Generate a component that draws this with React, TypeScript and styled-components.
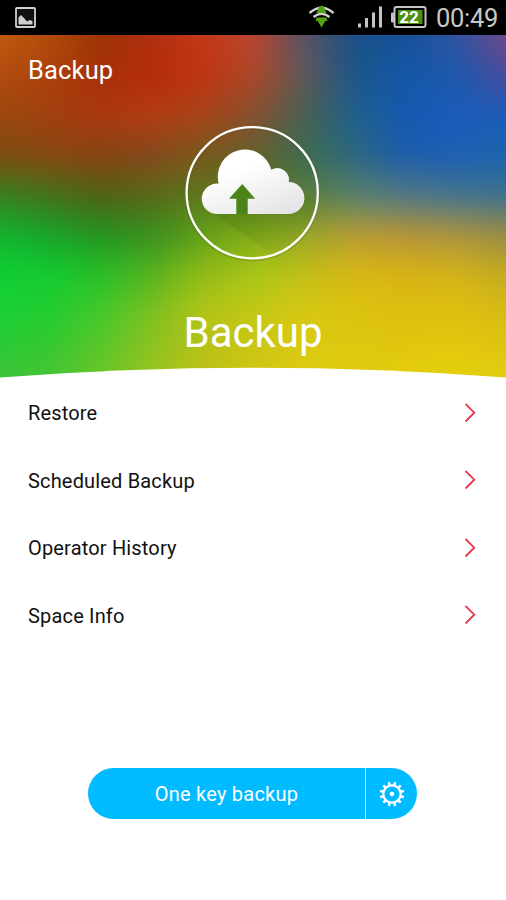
import React from "react";
import styled, { createGlobalStyle } from "styled-components";

const GlobalStyle = createGlobalStyle`
  body { margin: 0; background: #fff; }
  * { box-sizing: border-box; }
  button { border: 0; padding: 0; font: inherit; color: inherit; background: none; }
`;

/* Colour mesh of the hero: one entry per row, evenly spaced colours across. */
const MESH: { at: number; colors: string[] }[] = [
  { at: 0, colors: ["#c05c10", "#b04c0a", "#9a3406", "#b03010", "#c43818", "#bc4430", "#5c5264", "#185087", "#16509a", "#3054a0", "#70488c"] },
  { at: 40, colors: ["#b04c0e", "#ac400c", "#a83008", "#b42c08", "#c03412", "#ac4828", "#605858", "#1c5688", "#1458a8", "#1c58ac", "#484c9c"] },
  { at: 80, colors: ["#9c4810", "#a04010", "#ac3810", "#b43c14", "#a84418", "#885030", "#4a6050", "#20608c", "#1458b0", "#1c5cbc", "#1c5cb8"] },
  { at: 120, colors: ["#7c4c10", "#884810", "#884414", "#84481c", "#78581c", "#64602c", "#3c6c50", "#2c6880", "#1c5cac", "#1c60b4", "#1c64ac"] },
  { at: 160, colors: ["#388020", "#44701c", "#506018", "#586818", "#5c7820", "#607820", "#5c7c38", "#58806c", "#507884", "#44748c", "#3c7090"] },
  { at: 200, colors: ["#12b430", "#18a42c", "#249420", "#389020", "#60a018", "#84ac18", "#98a828", "#b89c34", "#b89438", "#ac9440", "#9c8c44"] },
  { at: 240, colors: ["#10d034", "#14cc30", "#28c028", "#58b420", "#94bc18", "#a8c818", "#c4c018", "#d8b814", "#d8b414", "#d4b418", "#c4ac20"] },
  { at: 280, colors: ["#1cd034", "#24cc30", "#48c82c", "#80c020", "#b4c418", "#c4c814", "#d8c814", "#dcc410", "#dcc010", "#e0c010", "#d8bc14"] },
  { at: 343, colors: ["#3cc438", "#48c434", "#6cc428", "#98c420", "#bcc018", "#d0c414", "#dccc10", "#e0cc10", "#e4cc0c", "#e4d00c", "#e4cc10"] },
];

/* Extra margin round the mesh, so that its blur has no visible edge. */
const BLEED = 40;

const Screen = styled.div`
  width: 506px;
  height: 900px;
  display: flex;
  flex-direction: column;
  background: #fff;
  font-family: Roboto, "Noto Sans", sans-serif;
  overflow: hidden;
`;

const StatusBar = styled.div`
  height: 35px;
  flex: none;
  display: flex;
  align-items: center;
  background: #000;
  color: #c8c8c8;
  padding: 0 8px 0 15px;
`;

const StatusSpacer = styled.div`
  flex: 1;
`;

const Clock = styled.span`
  font-size: 25.5px;
  line-height: 35px;
  width: 62px;
  padding-top: 2px;
  letter-spacing: -0.3px;
  white-space: nowrap;
`;

const Hero = styled.header`
  position: relative;
  height: 343px;
  flex: none;
  display: flex;
  flex-direction: column;
  align-items: center;
  color: #fff;
  overflow: hidden;
`;

const MeshLayer = styled.div`
  position: absolute;
  inset: -${BLEED}px;
  filter: blur(10px);
`;

const MeshRow = styled.div<{ $from: number; $to: number; $colors: string[] }>`
  position: absolute;
  inset: 0;
  background: ${(p) => {
    const last = p.$colors.length - 1;
    const stops = p.$colors.map((c, i) =>
      i === 0 ? `${c} ${BLEED}px` : i === last ? `${c} calc(100% - ${BLEED}px)` : c
    );
    return `linear-gradient(to right, ${stops.join(", ")})`;
  }};
  mask-image: ${(p) =>
    p.$to === 0
      ? "none"
      : `linear-gradient(to bottom, transparent ${p.$from + BLEED}px, #000 ${p.$to + BLEED}px)`};
`;

const AppTitle = styled.h1`
  position: relative;
  align-self: flex-start;
  margin: 19px 0 0 28px;
  font-size: 25.5px;
  font-weight: 400;
  letter-spacing: 0.15px;
  line-height: 32px;
`;

const Emblem = styled.svg`
  position: relative;
  display: block;
  margin-top: 36px;
  flex: none;
`;

const HeroTitle = styled.h2`
  position: relative;
  margin: 46px 0 0;
  font-size: 42px;
  font-weight: 400;
  line-height: 50px;
`;

const Curve = styled.svg`
  position: absolute;
  left: 0;
  bottom: 0;
  display: block;
`;

const Menu = styled.ul`
  list-style: none;
  margin: 0;
  padding: 1px 0 0;
`;

const MenuItem = styled.li`
  height: 67.5px;
  padding: 0 30px 0 28px;
  display: flex;
  align-items: center;
  justify-content: space-between;
  font-size: 20px;
  letter-spacing: 0.17px;
  color: #111;
`;

const MenuLabel = styled.span`
  line-height: 24px;
  padding-top: 1px;
`;

const ActionBar = styled.div`
  display: flex;
  width: 329px;
  height: 51px;
  margin: 119px 0 0 88px;
  border-radius: 26px;
  overflow: hidden;
  background: #00bbff;
  color: #fff;
`;

const MainAction = styled.button`
  width: 278px;
  border-right: 1px solid #d4f3ff;
  font-size: 20px;
  letter-spacing: 0.22px;
  line-height: 24px;
`;

const SettingsAction = styled.button`
  flex: 1;
  display: flex;
  align-items: center;
  justify-content: center;
`;

const PictureIcon = () => (
  <svg width="22" height="22" viewBox="0 0 22 22">
    <rect x="1" y="1" width="19" height="19" rx="1" fill="#111" stroke="#d0d0d0" strokeWidth="1.8" />
    <path d="M3.500 17.500V10.500l2.500-2.500 2.500 2.500 3.500 4 3-1.500 2.500 1v3.500z" fill="#d0d0d0" />
  </svg>
);

const StatusIcons = () => (
  <svg width="128" height="35" viewBox="308 0 128 35">
    <g fill="none" stroke="#d0d0d0" strokeWidth="2.400">
      <path d="M309.500 13Q321.500 2.500 333.500 13" />
      <path d="M313.500 17Q321.500 10.500 329.500 17" />
    </g>
    <path d="M319 7L321.500 5.500L324 7L326.500 13H316.500Z" fill="#55a012" />
    <path d="M316.500 17.500h10l1 3.500h-2.200l-3.800 6.500-3.800-6.500h-2.200z" fill="#55a012" />
    <g fill="#c4c4c4">
      <rect x="358" y="23.500" width="3" height="4" />
      <rect x="365" y="18" width="3" height="9.500" />
      <rect x="372" y="12.500" width="3" height="15" />
      <rect x="379" y="6.500" width="3" height="21" />
      <rect x="391" y="12.500" width="3" height="10" rx="1" />
    </g>
    <rect x="394.500" y="7" width="31" height="20" rx="2" fill="#000" stroke="#c4c4c4" strokeWidth="2" />
    <rect x="398" y="10" width="24.500" height="14" fill="#4c9010" />
    <text x="409" y="23" textAnchor="middle" fontSize="17" fontWeight="700" fill="#fff">22</text>
  </svg>
);

const CLOUD =
  "M217 214 A15.200 15.200 0 1 1 218.700 183.700 A26.500 26.500 0 1 1 271.300 169.800 A11.800 11.800 0 0 1 288.800 182 A16 16 0 0 1 288 214 Z";

const CloudEmblem = () => (
  <Emblem width="136" height="140" viewBox="185 122 136 140">
    <defs>
      <linearGradient id="cloud" x1="0.2" y1="0" x2="0.8" y2="1">
        <stop offset="0.3" stopColor="#fff" />
        <stop offset="1" stopColor="#e4e4e6" />
      </linearGradient>
      <linearGradient id="shade" x1="0.3" y1="0.2" x2="0.65" y2="0.9">
        <stop offset="0" stopColor="#407810" stopOpacity="0.36" />
        <stop offset="1" stopColor="#407810" stopOpacity="0.06" />
      </linearGradient>
      <clipPath id="disc">
        <circle cx="252.200" cy="192.700" r="65" />
      </clipPath>
    </defs>
    <g clipPath="url(#disc)">
      <path d="M210 211L276 257L322 240V206L300 189V211Z" fill="url(#shade)" />
    </g>
    <circle cx="252.200" cy="194" r="66" fill="none" stroke="#304008" strokeOpacity="0.14" strokeWidth="3" />
    <circle cx="252.200" cy="192.700" r="65.600" fill="none" stroke="#fff" strokeWidth="2.300" />
    <path d={CLOUD} fill="url(#cloud)" />
    <path d="M242.300 184L255.200 198.800H247.700V214.300H236.300V198.800H229Z" fill="#4c841c" />
  </Emblem>
);

const Chevron = () => (
  <svg width="12" height="20" viewBox="0 0 12 20" fill="none" stroke="#e23a4a" strokeWidth="1.8">
    <path d="M1.500 1L10.300 9.700L1.500 18.500" />
  </svg>
);

const TEETH = Array.from({ length: 12 }, (_, i) => i * 30 + 15);

const GearIcon = () => (
  <svg width="26" height="26" viewBox="-13 -13 26 26">
    <circle r="8.700" fill="none" stroke="#fff" strokeWidth="2.200" />
    <circle r="2.300" fill="#fff" />
    {TEETH.map((a) => (
      <rect key={a} x="-1.200" y="-12.300" width="2.400" height="3.500" fill="#fff" transform={`rotate(${a})`} />
    ))}
  </svg>
);

const ITEMS = ["Restore", "Scheduled Backup", "Operator History", "Space Info"];

export default function App() {
  return (
    <>
      <GlobalStyle />
      <Screen>
        <StatusBar>
          <PictureIcon />
          <StatusSpacer />
          <StatusIcons />
          <Clock>00:49</Clock>
        </StatusBar>
        <Hero>
          <MeshLayer>
            {MESH.map((row, i) => (
              <MeshRow key={row.at} $from={i ? MESH[i - 1].at : 0} $to={row.at} $colors={row.colors} />
            ))}
          </MeshLayer>
          <AppTitle>Backup</AppTitle>
          <CloudEmblem />
          <HeroTitle>Backup</HeroTitle>
          <Curve width="506" height="11" viewBox="0 0 506 11">
            <path d="M0 10.500Q253 -9 506 10.500V11H0Z" fill="#fff" />
          </Curve>
        </Hero>
        <Menu>
          {ITEMS.map((label) => (
            <MenuItem key={label}>
              <MenuLabel>{label}</MenuLabel>
              <Chevron />
            </MenuItem>
          ))}
        </Menu>
        <ActionBar>
          <MainAction>One key backup</MainAction>
          <SettingsAction aria-label="Settings">
            <GearIcon />
          </SettingsAction>
        </ActionBar>
      </Screen>
    </>
  );
}
